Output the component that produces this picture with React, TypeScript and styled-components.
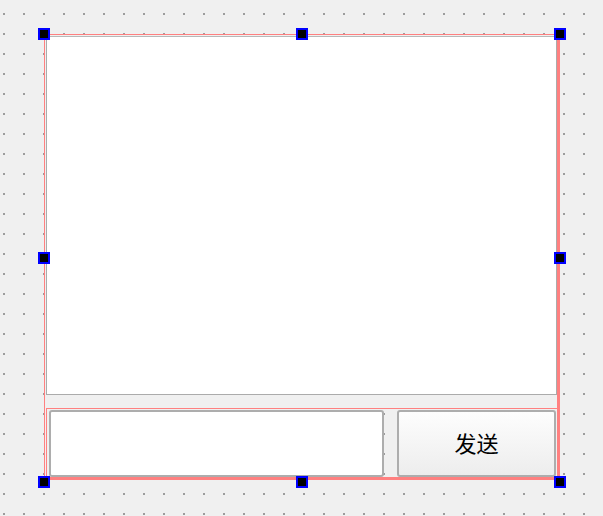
import React from "react";
import styled, { createGlobalStyle } from "styled-components";

const GlobalStyle = createGlobalStyle`
  html, body {
    margin: 0;
    padding: 0;
    background: #f0f0f0;
  }
  body {
    font-family: "Noto Sans CJK SC", "Noto Sans", sans-serif;
  }
`;

const Canvas = styled.div`
  width: 603px;
  height: 516px;
  box-sizing: border-box;
  padding: 34px 0 0 44px;
  background-color: #f0f0f0;
  background-image: conic-gradient(
    from 90deg at 2px 2px,
    transparent 0 50%,
    #9c9c9c 50% 75%,
    transparent 75%
  );
  background-size: 20px 20px;
  background-position: 3px 13px;
  overflow: hidden;
`;

const MainLayout = styled.div`
  position: relative;
  box-sizing: border-box;
  width: 516px;
  height: 446px;
  border: 1px solid #ff8080;
  border-right-width: 3px;
  border-bottom-width: 3px;
  display: flex;
  flex-direction: column;
`;

const TextEdit = styled.div`
  box-sizing: border-box;
  margin: 1px 0 13px 1px;
  height: 359px;
  background: #ffffff;
  border: 1px solid #ababab;
  border-top-color: #b8b8b8;
`;

const RowLayout = styled.div`
  box-sizing: border-box;
  margin-left: 1px;
  height: 69px;
  border-top: 1px solid #ff8080;
  border-left: 1px solid #ff8080;
  padding: 1px 1px 0 2px;
  display: flex;
  align-items: flex-start;
  gap: 13px;
`;

const LineEdit = styled.div`
  box-sizing: border-box;
  width: 335px;
  height: 67px;
  background: #ffffff;
  border: 2px solid #adadad;
  border-radius: 3px;
`;

const Button = styled.button`
  box-sizing: border-box;
  width: 159px;
  height: 67px;
  margin: 0;
  padding: 0 0 3px 0;
  border: 2px solid #adadad;
  border-radius: 3px;
  background: linear-gradient(#fdfdfd, #ededed);
  font-family: "Noto Sans CJK SC", "Noto Sans", sans-serif;
  font-size: 22px;
  color: #000000;
  display: flex;
  align-items: center;
  justify-content: center;
`;

const Handle = styled.div<{ $x: number; $y: number }>`
  position: absolute;
  left: ${(p) => p.$x}px;
  top: ${(p) => p.$y}px;
  width: 12px;
  height: 12px;
  box-sizing: border-box;
  background: #000000;
  border: 2px solid #0000ff;
`;

// handle positions in page coordinates; the absolute origin is the layout's padding box at (45,35)
const handlePositions: Array<[number, number]> = [
  [38, 28],
  [296, 28],
  [554, 28],
  [38, 252],
  [554, 252],
  [38, 476],
  [296, 476],
  [554, 476],
];

export default function App() {
  return (
    <>
      <GlobalStyle />
      <Canvas>
        <MainLayout>
          <TextEdit />
          <RowLayout>
            <LineEdit />
            <Button>发送</Button>
          </RowLayout>
          {handlePositions.map(([x, y], i) => (
            <Handle key={i} $x={x - 45} $y={y - 35} />
          ))}
        </MainLayout>
      </Canvas>
    </>
  );
}
